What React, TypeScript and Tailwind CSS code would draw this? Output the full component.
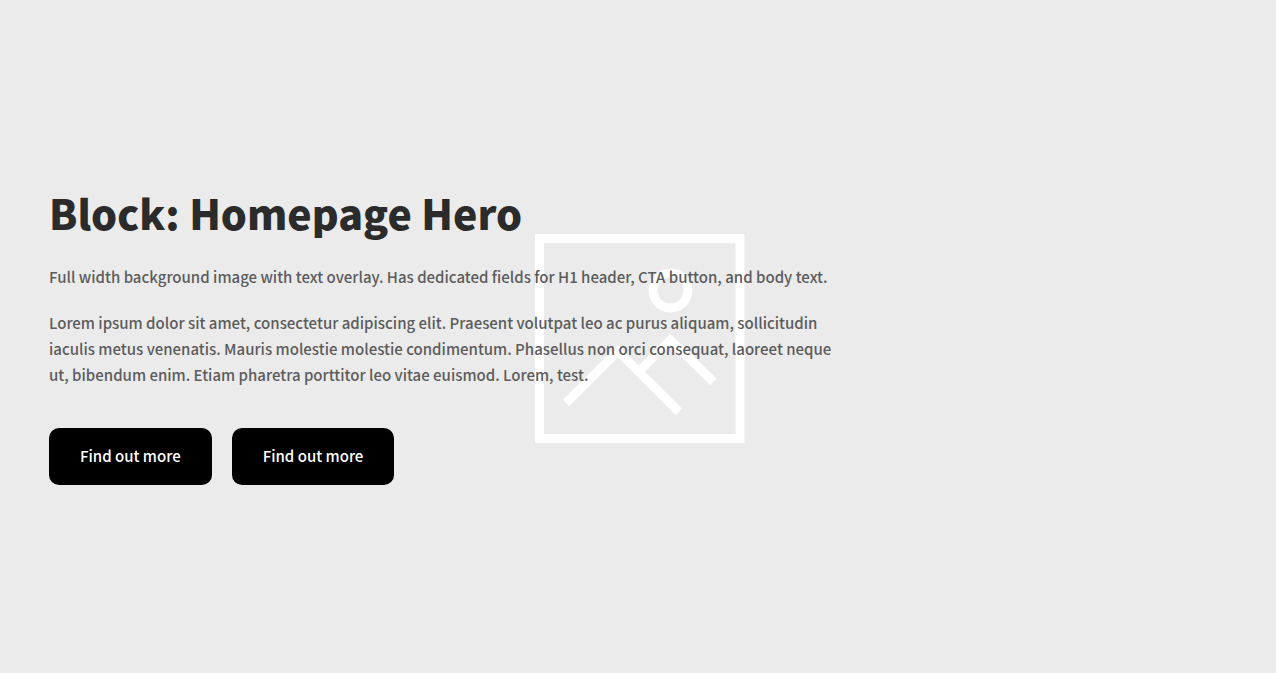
export default function App() {
  return (
    <main className="relative flex min-h-screen flex-col justify-center bg-[#ebebeb] px-[49px] font-['Noto_Sans_CJK_SC','Noto_Sans',sans-serif]">
      <div className="absolute inset-0 flex items-center justify-center" aria-hidden="true">
        <svg viewBox="0 0 210 210" className="mt-[4px] ml-[4px] size-[210px]" fill="none" stroke="#fff" strokeWidth="9">
          <rect x="4.5" y="4.5" width="200.5" height="200" />
          <circle cx="135.5" cy="56.5" r="17.5" />
          <path d="M31 169L83 117L144 178M104 137.5L135.5 106L178.5 148" />
        </svg>
      </div>
      <section className="relative max-w-[784px]">
        <h1 className="mb-7 text-[41px] leading-[48px] font-black text-[#2b2b2b]">Block: Homepage Hero</h1>
        <div className="space-y-5 text-[15px] leading-[26px] font-medium text-[#5c5c5c]">
          <p>Full width background image with text overlay. Has dedicated fields for H1 header, CTA button, and body text.</p>
          <p>
            Lorem ipsum dolor sit amet, consectetur adipiscing elit. Praesent volutpat leo ac purus aliquam, sollicitudin
            iaculis metus venenatis. Mauris molestie molestie condimentum. Phasellus non orci consequat, laoreet neque
            ut, bibendum enim. Etiam pharetra porttitor leo vitae euismod. Lorem, test.
          </p>
        </div>
        <div className="mt-10 flex flex-wrap gap-5 text-[15px] leading-[25px] font-medium text-white">
          <a href="#first" className="rounded-[10px] bg-black px-[31px] pt-[15px] pb-[17px]">Find out more</a>
          <a href="#second" className="rounded-[10px] bg-black px-[31px] pt-[15px] pb-[17px]">Find out more</a>
        </div>
      </section>
    </main>
  );
}
